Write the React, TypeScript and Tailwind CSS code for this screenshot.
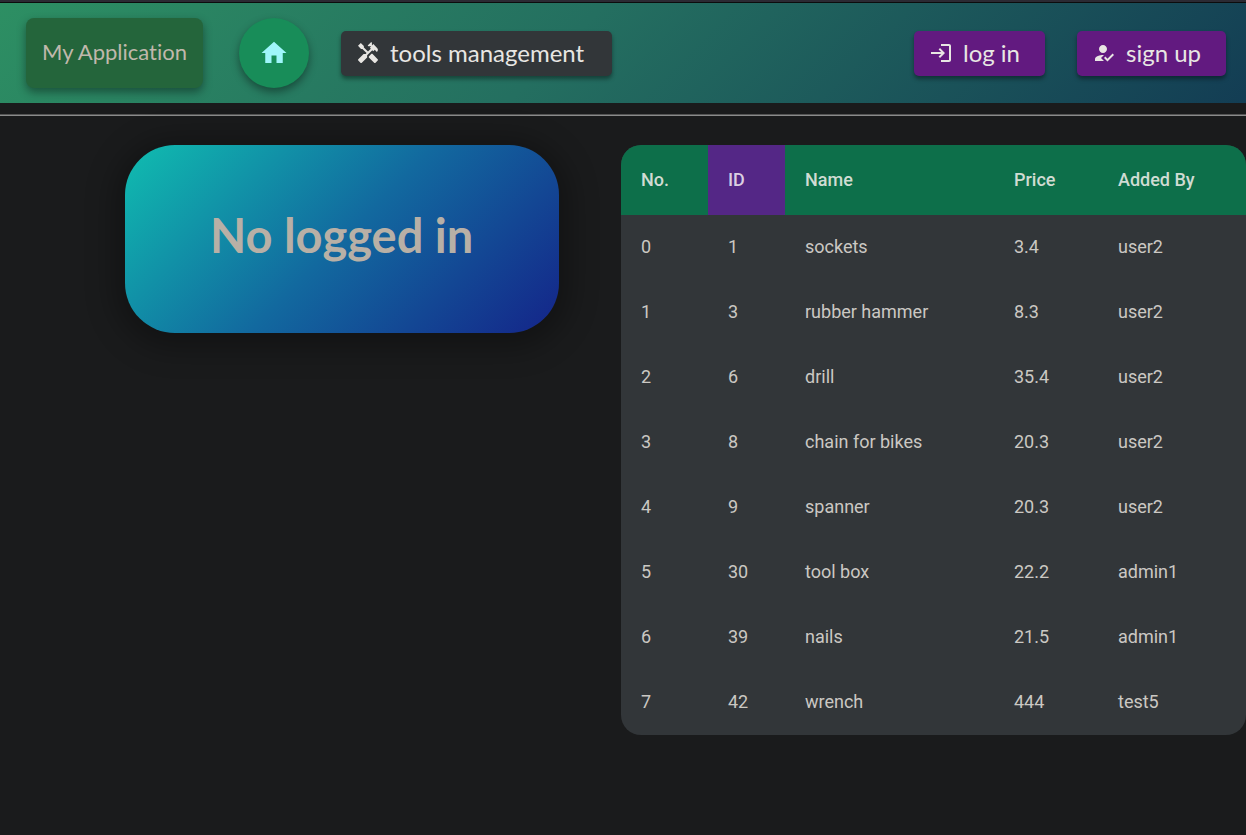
import { MdHandyman, MdHome, MdHowToReg, MdLogin } from "react-icons/md";

type Tool = { id: number; name: string; price: string; addedBy: string };

const tools: Tool[] = [
  { id: 1, name: "sockets", price: "3.4", addedBy: "user2" },
  { id: 3, name: "rubber hammer", price: "8.3", addedBy: "user2" },
  { id: 6, name: "drill", price: "35.4", addedBy: "user2" },
  { id: 8, name: "chain for bikes", price: "20.3", addedBy: "user2" },
  { id: 9, name: "spanner", price: "20.3", addedBy: "user2" },
  { id: 30, name: "tool box", price: "22.2", addedBy: "admin1" },
  { id: 39, name: "nails", price: "21.5", addedBy: "admin1" },
  { id: 42, name: "wrench", price: "444", addedBy: "test5" },
];

const raised = "shadow-[0_3px_4px_rgba(0,0,0,0.4)]";

function Header() {
  return (
    <header className="flex min-h-[100px] flex-wrap items-center justify-between gap-4 bg-linear-[135deg,#2d8f63,#246f60_45%,#133d54] pr-5 pl-[26px] font-[Lato,sans-serif] [font-variant-ligatures:none]">
      <div className="flex flex-wrap items-center gap-8">
        <div className="mr-1 flex h-[70px] w-[177px] items-center justify-center rounded-lg bg-[#24653b] pb-1 text-[22px] text-[#c0b8ac] shadow-[0_4px_10px_rgba(0,0,0,0.4)]">
          My Application
        </div>
        <button
          type="button"
          aria-label="Home"
          className="flex size-[70px] items-center justify-center rounded-full bg-[#188d59] text-[#9ff6fb] shadow-[0_4px_8px_rgba(0,0,0,0.4)]"
        >
          <MdHome className="size-[30px]" />
        </button>
        <button
          type="button"
          className={`flex h-[45px] w-[271px] items-center gap-2.5 rounded-[5px] bg-[#323639] pl-[15px] text-2xl text-[#e8e6e3] ${raised}`}
        >
          <MdHandyman className="size-6" />
          tools management
        </button>
      </div>
      <div className="flex items-center gap-8">
        <button
          type="button"
          className={`flex h-[45px] w-[131px] items-center gap-2.5 rounded-[5px] bg-[#621a80] pl-[15px] text-2xl text-[#e8e6e3] ${raised}`}
        >
          <MdLogin className="size-6" />
          log in
        </button>
        <button
          type="button"
          className={`flex h-[45px] w-[149px] items-center gap-2.5 rounded-[5px] bg-[#621a80] pl-[15px] text-2xl text-[#e8e6e3] ${raised}`}
        >
          <MdHowToReg className="size-6" />
          sign up
        </button>
      </div>
    </header>
  );
}

function ToolsTable() {
  return (
    <div className="w-full overflow-hidden rounded-[20px] bg-[#323639] lg:w-[625px] lg:shrink-0">
      <table className="w-full table-fixed text-left font-[Roboto,sans-serif] text-lg text-[#cbc8c3]">
        <colgroup>
          <col className="w-[87px]" />
          <col className="w-[77px]" />
          <col className="w-[209px]" />
          <col className="w-[104px]" />
          <col />
        </colgroup>
        <thead>
          <tr className="h-[70px] bg-[#0d6f4a] text-[#d0dcd3]">
            <th className="px-5 font-medium">No.</th>
            <th className="bg-[#542786] px-5 font-medium text-[#dbcfe2]">ID</th>
            <th className="px-5 font-medium">Name</th>
            <th className="px-5 font-medium">Price</th>
            <th className="px-5 font-medium">Added By</th>
          </tr>
        </thead>
        <tbody>
          {tools.map((tool, index) => (
            <tr key={tool.id} className="h-[65px]">
              <td className="px-5 pb-0.5">{index}</td>
              <td className="px-5 pb-0.5">{tool.id}</td>
              <td className="px-5 pb-0.5">{tool.name}</td>
              <td className="px-5 pb-0.5">{tool.price}</td>
              <td className="px-5 pb-0.5">{tool.addedBy}</td>
            </tr>
          ))}
        </tbody>
      </table>
    </div>
  );
}

export default function App() {
  return (
    <div className="min-h-screen border-t-2 border-[#2b2a33] bg-[#1a1b1c]">
      <div className="border-t border-[#0c0c0d]">
        <Header />
        <hr className="mt-[11px] h-0.5 border-t border-b border-t-[#545454] border-b-[#8b8b8b]" />
        <main className="mt-[29px] flex flex-col items-start gap-8 lg:flex-row lg:gap-0">
          <section className="flex w-full justify-center lg:flex-1 lg:pl-[5%]">
            <div className="flex h-[188px] w-[434px] items-center justify-center rounded-[50px] bg-linear-[135deg,#10bdb0,#12699f_50%,#142489] pb-2 shadow-[0_5px_30px_10px_rgba(0,0,0,0.3)]">
              <h1 className="font-[Lato,sans-serif] text-[47px] font-bold text-[#b8b0a6]">
                No logged in
              </h1>
            </div>
          </section>
          <ToolsTable />
        </main>
      </div>
    </div>
  );
}
